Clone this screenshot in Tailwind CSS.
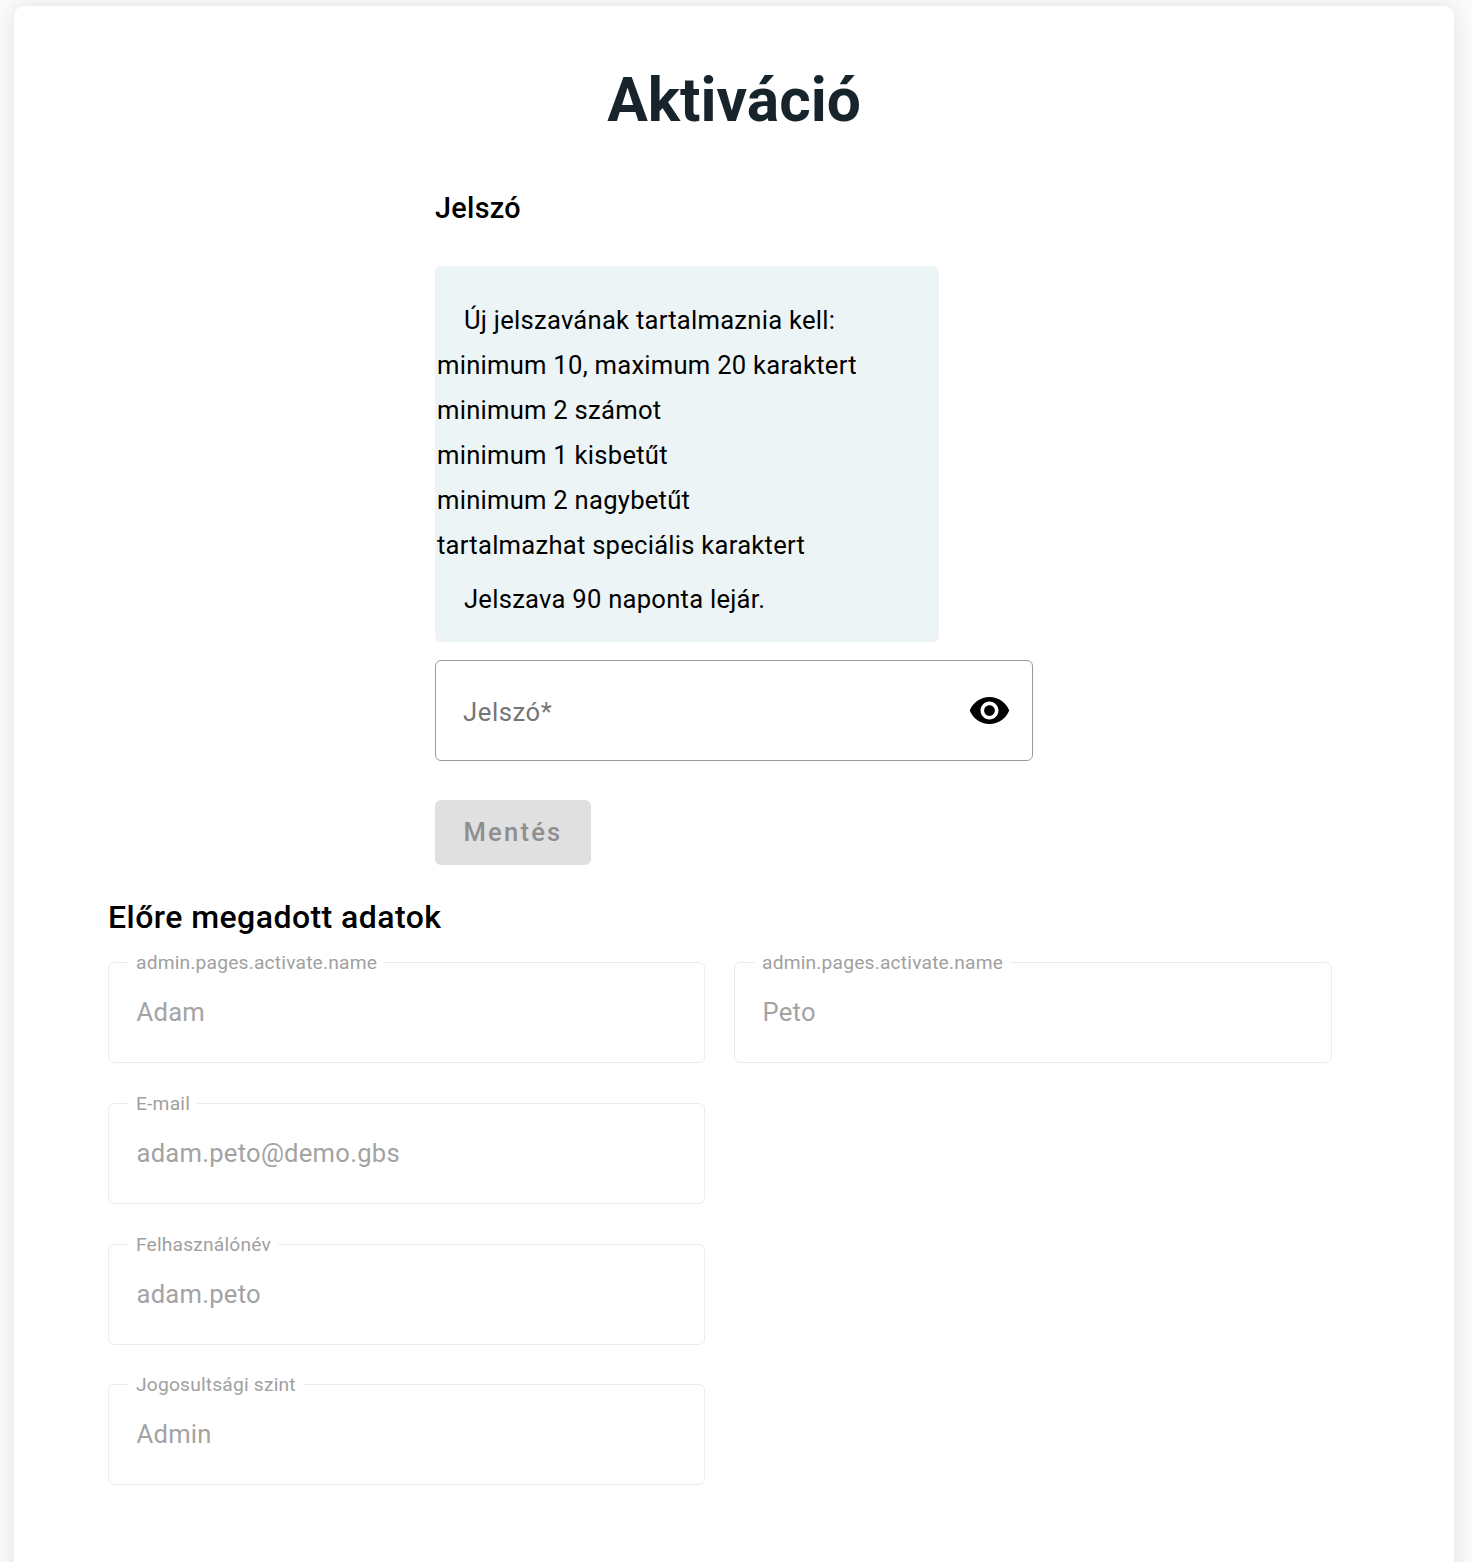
<!DOCTYPE html>
<html lang="hu">
<head>
<meta charset="utf-8">
<script src="https://cdn.jsdelivr.net/npm/@tailwindcss/browser@4"></script>
</head>
<body class="bg-[#fbfbfb] font-[Roboto,sans-serif] overflow-hidden">
<div class="h-[1562px] pl-[14px] pt-[6px]">
  <main class="w-[1440px] h-[1600px] bg-white rounded-[10px] shadow-[0_0_22px_rgba(0,0,0,0.11)] pl-[94px] pr-[122px] pt-[57px]">
    <h1 class="ml-[-94px] mr-[-122px] text-center text-[60.5px] leading-[76px] font-bold text-[#18242b]">Aktiváció</h1>
    <section class="w-[598px] ml-[327px] mt-[51px]">
      <h2 class="text-[28.8px] leading-[36px] tracking-[0.3px] font-medium text-black">Jelszó</h2>
      <div class="mt-[40px] w-[504px] h-[376px] bg-[#edf4f6] rounded-[6px] px-[2px] pt-[32px] text-[25.6px] leading-[45px] tracking-[0.25px] text-black">
        <p class="pl-[27px]">Új jelszavának tartalmaznia kell:</p>
        <p>minimum 10, maximum 20 karaktert</p>
        <p>minimum 2 számot</p>
        <p>minimum 1 kisbetűt</p>
        <p>minimum 2 nagybetűt</p>
        <p>tartalmazhat speciális karaktert</p>
        <p class="pl-[27px] mt-[9px]">Jelszava 90 naponta lejár.</p>
      </div>
      <div class="mt-[18px] h-[101px] border border-[#9a9a9a] rounded-[6px] flex items-center justify-between pl-[27px] pr-[21px]">
        <span class="pt-[4px] text-[25.6px] tracking-[0.6px] text-[#757575]">Jelszó*</span>
        <svg class="w-[43px] h-[43px]" viewBox="0 0 24 24" fill="#000"><path d="M12 4.5C7 4.5 2.73 7.61 1 12c1.73 4.39 6 7.5 11 7.5s9.27-3.11 11-7.5c-1.73-4.39-6-7.5-11-7.5zM12 17c-2.76 0-5-2.24-5-5s2.24-5 5-5 5 2.24 5 5-2.24 5-5 5zm0-8c-1.66 0-3 1.34-3 3s1.34 3 3 3 3-1.34 3-3-1.34-3-3-3z"/></svg>
      </div>
      <button class="block mt-[39px] w-[156px] h-[65px] rounded-[6px] bg-[#e0e0e0] text-[#8f8f8f] text-[25.6px] font-medium tracking-[2.2px]">Mentés</button>
    </section>
    <h2 class="mt-[30px] text-[32px] leading-[44px] tracking-[0.45px] font-medium text-black">Előre megadott adatok</h2>
    <div class="mt-[23px] grid grid-cols-[597px_598px] gap-x-[29px] gap-y-[40px]">
      <div class="relative h-[101px] border border-[#ececec] rounded-[6px] flex items-center pl-[27.5px] text-[25.6px] tracking-[0.25px] text-[#a3a3a3]">
        <span class="absolute left-[20px] top-[-11px] bg-white px-[7px] text-[19.2px] leading-[22px] tracking-[0.2px] text-[#a0a0a0]">admin.pages.activate.name</span>Adam
      </div>
      <div class="relative h-[101px] border border-[#ececec] rounded-[6px] flex items-center pl-[27.5px] text-[25.6px] tracking-[0.25px] text-[#a3a3a3]">
        <span class="absolute left-[20px] top-[-11px] bg-white px-[7px] text-[19.2px] leading-[22px] tracking-[0.2px] text-[#a0a0a0]">admin.pages.activate.name</span>Peto
      </div>
      <div class="relative h-[101px] border border-[#ececec] rounded-[6px] flex items-center pl-[27.5px] text-[25.6px] tracking-[0.25px] text-[#a3a3a3]">
        <span class="absolute left-[20px] top-[-11px] bg-white px-[7px] text-[19.2px] leading-[22px] tracking-[0.2px] text-[#a0a0a0]">E-mail</span>adam.peto@demo.gbs
      </div>
      <div></div>
      <div class="relative h-[101px] border border-[#ececec] rounded-[6px] flex items-center pl-[27.5px] text-[25.6px] tracking-[0.25px] text-[#a3a3a3]">
        <span class="absolute left-[20px] top-[-11px] bg-white px-[7px] text-[19.2px] leading-[22px] tracking-[0.2px] text-[#a0a0a0]">Felhasználónév</span>adam.peto
      </div>
      <div></div>
      <div class="relative mt-[-1px] h-[101px] border border-[#ececec] rounded-[6px] flex items-center pl-[27.5px] text-[25.6px] tracking-[0.25px] text-[#a3a3a3]">
        <span class="absolute left-[20px] top-[-11px] bg-white px-[7px] text-[19.2px] leading-[22px] tracking-[0.2px] text-[#a0a0a0]">Jogosultsági szint</span>Admin
      </div>
    </div>
  </main>
</div>
</body>
</html>
